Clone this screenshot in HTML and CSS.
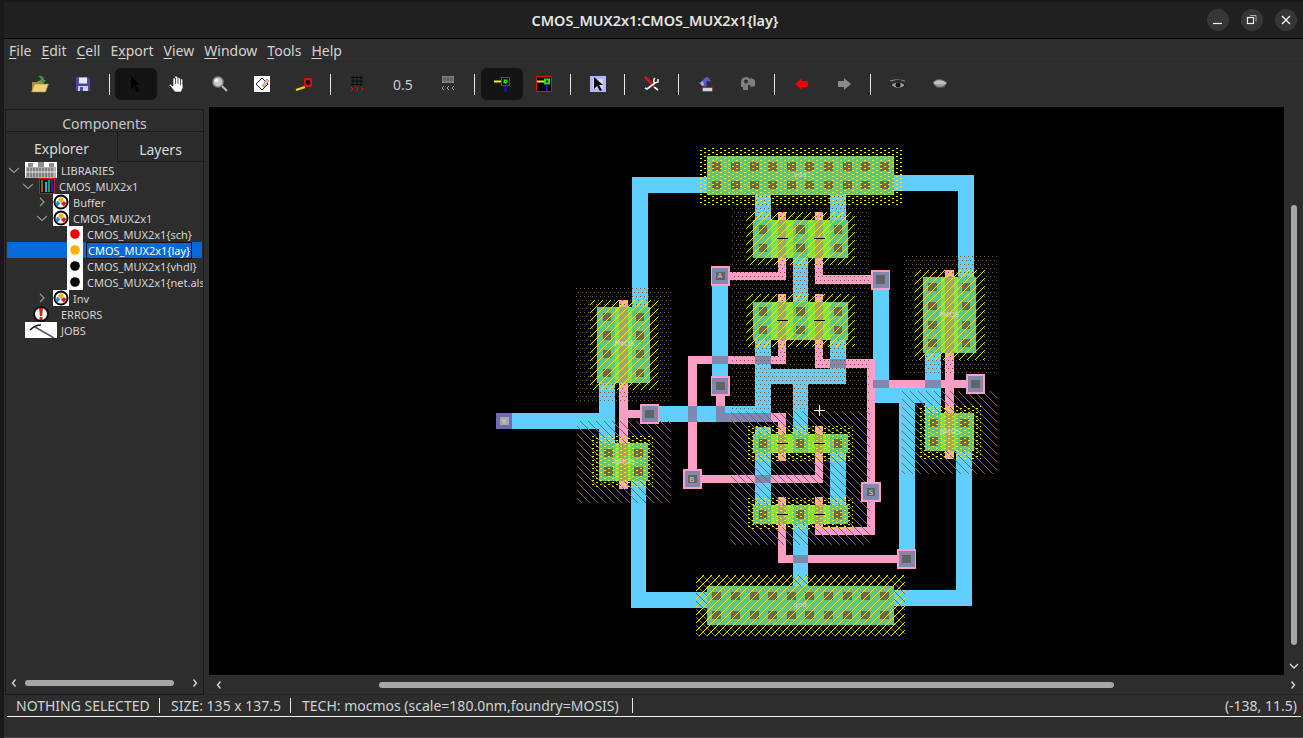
FILE: index.html
```html
<!DOCTYPE html>
<html lang="en">
<head>
    <meta charset="UTF-8">
    <title>CMOS_MUX2x1:CMOS_MUX2x1{lay}</title>
    <link rel="stylesheet" href="styles.css">
</head>
<body>
<svg class="defs" width="0" height="0">
    <symbol id="cell-ico" viewBox="0 0 16 16">
        <rect width="16" height="16" fill="#fff"/>
        <circle cx="8" cy="8" r="6.5" fill="#fff" stroke="#000" stroke-width="2"/>
        <path d="M8 3l3 3-3 3-3-3z" fill="#f5b000"/>
        <path d="M4.500 6.500l3 3-3 3-2-3z" fill="#1e90e0"/>
        <path d="M11 7l2.500 2.500-3 3-2.500-3z" fill="#e81010"/>
    </symbol>
    <symbol id="chev-right" viewBox="0 0 10 10">
        <path d="M3 1l4 4-4 4" fill="none" stroke="#9a9a9a" stroke-width="1.100"/>
    </symbol>
    <symbol id="chev-down" viewBox="0 0 10 10">
        <path d="M0 3l5 4.500 5-4.500" fill="none" stroke="#9a9a9a" stroke-width="1.100"/>
    </symbol>
    <symbol id="sb-left" viewBox="0 0 10 10">
        <path d="M6.500 1.500l-3 3.500 3 3.500" fill="none" stroke="#e0e0e0" stroke-width="1.300"/>
    </symbol>
    <symbol id="sb-right" viewBox="0 0 10 10">
        <path d="M3.500 1.500l3 3.500-3 3.500" fill="none" stroke="#e0e0e0" stroke-width="1.300"/>
    </symbol>
    <symbol id="sb-down" viewBox="0 0 10 10">
        <path d="M1 3l4 4 4-4" fill="none" stroke="#e0e0e0" stroke-width="1.300"/>
    </symbol>
</svg>

<div class="window">
    <header class="titlebar">
        <span></span>
        <div class="title">CMOS_MUX2x1:CMOS_MUX2x1{lay}</div>
        <div class="win-btns">
            <button class="win-btn"><svg width="12" height="12" viewBox="0 0 12 12"><path d="M1 9.500h9" stroke="#eee" stroke-width="1.200"/></svg></button>
            <button class="win-btn"><svg width="12" height="12" viewBox="0 0 12 12"><rect x="1.500" y="3.500" width="6" height="6" fill="none" stroke="#eee" stroke-width="1.200"/><path d="M4 1.500h6v6" fill="none" stroke="#aaa"/></svg></button>
            <button class="win-btn"><svg width="12" height="12" viewBox="0 0 12 12"><path d="M2 2l8 8M10 2l-8 8" stroke="#eee" stroke-width="1.500"/></svg></button>
        </div>
    </header>

    <nav class="menubar">
        <span><u>F</u>ile</span>
        <span><u>E</u>dit</span>
        <span><u>C</u>ell</span>
        <span>E<u>x</u>port</span>
        <span><u>V</u>iew</span>
        <span><u>W</u>indow</span>
        <span><u>T</u>ools</span>
        <span><u>H</u>elp</span>
    </nav>

    <div class="toolbar">
        <div class="tool">
            <svg width="20" height="20" viewBox="0 0 20 20"><path d="M2 8h5l1-1h6v3H6l-3 8H2z" fill="#a88a3a"/><path d="M1.500 18l3-8h14l-3 8z" fill="#ecd27a" stroke="#a08030" stroke-width=".6"/><path d="M8 2c4-1 6 1 6 4h2l-3 4-4-4h2c0-2-1-3-3-4z" fill="#3c9a3c"/></svg>
        </div>
        <div class="tool tool-gap">
            <svg width="18" height="18" viewBox="0 0 18 18"><path d="M2 2h12l2 2v12H2z" fill="#4a4a98"/><rect x="5" y="2.500" width="8" height="6" fill="#e8e8f0"/><rect x="4" y="11" width="10" height="5" fill="#cfcfe4"/><rect x="6" y="12" width="3" height="4" fill="#4a4a98"/></svg>
        </div>
        <i class="sep"></i>
        <div class="tool on">
            <svg width="18" height="18" viewBox="0 0 18 18"><path d="M4 1v13l3-3 3 6 2-1-3-6h4z" fill="#000"/></svg>
        </div>
        <div class="tool">
            <svg width="20" height="20" viewBox="0 0 20 20"><path d="M3 13l-2-2 1-1 3 2V4h2V2h2v1h2v1h2v1h2v9l-2 4H7z" fill="#fff" stroke="#222" stroke-width=".6"/><path d="M7.500 4v6M10 3v7M12.500 4v7M15 5v6" stroke="#222" stroke-width=".8"/></svg>
        </div>
        <div class="tool">
            <svg width="18" height="18" viewBox="0 0 18 18"><circle cx="7" cy="7" r="5" fill="#c8c8c8" stroke="#8a8a8a" stroke-width="1.500"/><circle cx="5.500" cy="5.500" r="2" fill="#f0f0f0"/><path d="M11 11l5 5" stroke="#b8b8b8" stroke-width="2.200"/></svg>
        </div>
        <div class="tool">
            <svg width="16" height="16" viewBox="0 0 16 16"><rect width="16" height="16" fill="#fff"/><path d="M8 2l6 6-6 6-6-6z" fill="#fff" stroke="#102080"/><path d="M8 10l5-7 2 2-5 6z" fill="#e8c890" stroke="#8a6a30" stroke-width=".6"/></svg>
        </div>
        <div class="tool">
            <svg width="18" height="16" viewBox="0 0 18 16"><path d="M1 14l9-3" stroke="#f0e000" stroke-width="2"/><rect x="9" y="2" width="8" height="9" rx="2" fill="#e01010"/><circle cx="13" cy="6.500" r="2.500" fill="#111"/></svg>
        </div>
        <i class="sep"></i>
        <div class="tool">
            <svg width="14" height="16" viewBox="0 0 14 16"><path d="M1 1.500h12M1 5h12M1 8.500h12M3 0v10M7 0v10M11 0v10" stroke="#0c0c0c" stroke-width="1"/><path d="M1 11l2 2-2 2M6 11l2 2-2 2M11 11l2 2-2 2" fill="none" stroke="#e01010"/></svg>
        </div>
        <div class="tool tool-text">0.5</div>
        <div class="tool">
            <svg width="14" height="16" viewBox="0 0 14 16"><rect x="1" y="0" width="12" height="7" fill="#8a8a8a"/><path d="M4 0v7M7 0v7M10 0v7M1 2h12M1 4h12" stroke="#3a3a3a" stroke-width=".6"/><path d="M3 10l-2 2 2 2M8 10l-2 2 2 2M13 10l-2 2 2 2" fill="none" stroke="#999"/></svg>
        </div>
        <i class="sep sep-wide"></i>
        <div class="tool on">
            <svg width="16" height="15" viewBox="0 0 16 15"><path d="M0 4.500h8" stroke="#f0f000" stroke-width="2"/><rect x="7.500" y="0.500" width="8" height="8" fill="#000" stroke="#e01010"/><rect x="9.500" y="2.500" width="4" height="4" fill="#20e020"/><rect x="11" y="4" width="1" height="1" fill="#000"/><path d="M11.500 9v6" stroke="#1010e0" stroke-width="2"/></svg>
        </div>
        <div class="tool">
            <svg width="16" height="16" viewBox="0 0 16 16"><rect x=".5" y=".5" width="15" height="15" fill="#000" stroke="#e01010"/><path d="M1 5.500h8" stroke="#f0f000" stroke-width="2"/><rect x="8" y="2.500" width="6" height="6" fill="#20e020"/><rect x="10" y="4.500" width="2" height="2" fill="#000"/><path d="M11 9v6" stroke="#1010e0" stroke-width="2"/></svg>
        </div>
        <i class="sep sep-wide"></i>
        <div class="tool">
            <svg width="16" height="16" viewBox="0 0 16 16"><rect width="16" height="16" fill="#b4b4ff"/><rect x="3" y="3" width="10" height="10" fill="#d8d8ff"/><path d="M4 1v12l3-3 3 5 2-1-3-5h4z" fill="#000"/></svg>
        </div>
        <i class="sep sep-wide"></i>
        <div class="tool">
            <svg width="18" height="18" viewBox="0 0 18 18"><path d="M2 2l9 9" stroke="#d01818" stroke-width="2.500"/><path d="M12 8l-8 6-2-1M11 12l4 3" fill="none" stroke="#f4f4f4" stroke-width="1.600"/><path d="M12 3a3 3 0 0 0 0 5l3-1 0-3" fill="none" stroke="#f4f4f4" stroke-width="1.500"/></svg>
        </div>
        <i class="sep sep-wide"></i>
        <div class="tool">
            <svg width="16" height="16" viewBox="0 0 16 16"><path d="M1 7l3-2 1-1 3-3 3 1 2 4-3-1-2 1 1 3-2 2-3-1-2-2z" fill="#5858c0"/><path d="M2 7l3-2 1 4-2 1z" fill="#a8a8e8"/><rect x="4.500" y="11.500" width="10" height="4" rx="1" fill="#e0d0d0" stroke="#b83030"/></svg>
        </div>
        <div class="tool">
            <svg width="16" height="16" viewBox="0 0 16 16"><path d="M1 6a5 5 0 0 1 9-3l1-1 4 2v6l-4 1-1-2H8v5H3v-3H1z" fill="#7e7e7e"/><circle cx="6" cy="5.500" r="2" fill="#2d2d2d"/></svg>
        </div>
        <i class="sep sep-wide"></i>
        <div class="tool">
            <svg width="14" height="14" viewBox="0 0 14 14"><path d="M0 7l7-6v3h6v6H7v3z" fill="#f00000"/></svg>
        </div>
        <div class="tool">
            <svg width="14" height="14" viewBox="0 0 14 14"><path d="M14 7L7 1v3H1v6h6v3z" fill="#8a8a8a"/></svg>
        </div>
        <i class="sep sep-wide"></i>
        <div class="tool">
            <svg width="16" height="11" viewBox="0 0 16 11"><path d="M1 6c3-4 10-4 14 0-3 4-10 5-14 0z" fill="#9a9a9a" stroke="#1a1a1a"/><circle cx="8" cy="6" r="2.500" fill="#111"/><path d="M0 2l5-1M4 0h6M11 1l4 1" stroke="#8a8a8a"/></svg>
        </div>
        <div class="tool">
            <svg width="16" height="10" viewBox="0 0 16 10"><path d="M1 4c3-5 10-4 14 0-3 5-10 6-14 0z" fill="#c0c0c0" stroke="#5a5a5a"/><path d="M2 6h12M4 8h9" stroke="#707070" stroke-width=".8"/></svg>
        </div>
    </div>

    <div class="main">
        <aside class="side">
            <div class="tab-top">Components</div>
            <div class="tabs">
                <div class="tab tab-active">Explorer</div>
                <div class="tab">Layers</div>
            </div>
            <div class="tree">
                <div class="row d0">
                    <svg class="chev"><use href="#chev-down"/></svg>
                    <svg class="ico-wide" viewBox="0 0 32 16"><rect width="32" height="16" fill="#fff"/><path d="M1 5h30v11H1z" fill="#b0b0b0"/><path d="M3 1h5v4H3zM13 0h6v5h-6zM24 1h5v4h-5z" fill="#8e8e8e"/><path d="M3 6v9M6 6v9M9 6v9M12 6v9M15 6v9M18 6v9M21 6v9M24 6v9M27 6v9" stroke="#555" stroke-width="1"/><path d="M1 10h30" stroke="#e6e6e6"/></svg>
                    <span>LIBRARIES</span>
                </div>
                <div class="row d1">
                    <svg class="chev"><use href="#chev-down"/></svg>
                    <svg class="ico" viewBox="0 0 16 16"><rect x=".5" y=".5" width="15" height="15" fill="#111" stroke="#e01010"/><rect x="2" y="2" width="2" height="12" fill="#8a5a20"/><rect x="6" y="4" width="2" height="10" fill="#20a8f0"/><rect x="9" y="2" width="2" height="12" fill="#20a040"/><rect x="12" y="2" width="2" height="12" fill="#2020c8"/></svg>
                    <span>CMOS_MUX2x1</span>
                </div>
                <div class="row d2">
                    <svg class="chev"><use href="#chev-right"/></svg>
                    <svg class="ico"><use href="#cell-ico"/></svg>
                    <span>Buffer</span>
                </div>
                <div class="row d2">
                    <svg class="chev"><use href="#chev-down"/></svg>
                    <svg class="ico"><use href="#cell-ico"/></svg>
                    <span>CMOS_MUX2x1</span>
                </div>
                <div class="row d3">
                    <span class="chev"></span>
                    <svg class="ico" viewBox="0 0 16 16"><rect width="16" height="16" fill="#fff"/><circle cx="8" cy="8" r="4.800" fill="#f00000"/></svg>
                    <span>CMOS_MUX2x1{sch}</span>
                </div>
                <div class="row d3 selected">
                    <span class="chev"></span>
                    <svg class="ico" viewBox="0 0 16 16"><rect width="16" height="16" fill="#fff"/><circle cx="8" cy="8" r="4.800" fill="#ffb000"/></svg>
                    <span class="sel-label">CMOS_MUX2x1{lay}</span>
                </div>
                <div class="row d3">
                    <span class="chev"></span>
                    <svg class="ico" viewBox="0 0 16 16"><rect width="16" height="16" fill="#fff"/><circle cx="8" cy="8" r="4.800" fill="#000"/></svg>
                    <span>CMOS_MUX2x1{vhdl}</span>
                </div>
                <div class="row d3">
                    <span class="chev"></span>
                    <svg class="ico" viewBox="0 0 16 16"><rect width="16" height="16" fill="#fff"/><circle cx="8" cy="8" r="4.800" fill="#000"/></svg>
                    <span>CMOS_MUX2x1{net.als}</span>
                </div>
                <div class="row d2">
                    <svg class="chev"><use href="#chev-right"/></svg>
                    <svg class="ico"><use href="#cell-ico"/></svg>
                    <span>Inv</span>
                </div>
                <div class="row d0">
                    <span class="chev"></span>
                    <svg class="ico ico-err" viewBox="0 0 16 16"><circle cx="8" cy="8" r="7" fill="#fff" stroke="#111" stroke-width="2"/><path d="M6 2h4l-1 8H7z" fill="#e01818"/><rect x="6.500" y="11" width="3" height="3" fill="#e01818"/></svg>
                    <span>ERRORS</span>
                </div>
                <div class="row d0">
                    <span class="chev"></span>
                    <svg class="ico-wide" viewBox="0 0 32 16"><rect width="32" height="16" fill="#fff"/><path d="M5 8c3-3 7-5 11-5" fill="none" stroke="#111" stroke-width="1.500"/><path d="M10 5l19 11" stroke="#555" stroke-width="1.500"/></svg>
                    <span>JOBS</span>
                </div>
            </div>
            <div class="side-scroll">
                <svg class="arrow"><use href="#sb-left"/></svg>
                <div class="side-track"><div class="side-thumb"></div></div>
                <svg class="arrow"><use href="#sb-right"/></svg>
            </div>
        </aside>

        <section class="workspace">
            <svg class="canvas" width="1075" height="568" viewBox="209 107 1075 568" shape-rendering="crispEdges">
                <rect x="209" y="107" width="1075" height="568" fill="#000"/>

                <g fill="#60cfff">
                    <rect x="632" y="177" width="76" height="16"/>
                    <rect x="632" y="177" width="16" height="130"/>
                    <rect x="631" y="480" width="15" height="127"/>
                    <rect x="631" y="592" width="77" height="16"/>
                    <rect x="893" y="175" width="81" height="16"/>
                    <rect x="958" y="175" width="16" height="103"/>
                    <rect x="956" y="450" width="16" height="156"/>
                    <rect x="893" y="590" width="79" height="16"/>
                    <rect x="755" y="195" width="16" height="26"/>
                    <rect x="830" y="195" width="16" height="26"/>
                    <rect x="793" y="257" width="15" height="46"/>
                    <rect x="755" y="339" width="16" height="45"/>
                    <rect x="830" y="339" width="16" height="45"/>
                    <rect x="755" y="369" width="91" height="15"/>
                    <rect x="755" y="369" width="16" height="53"/>
                    <rect x="793" y="384" width="15" height="51"/>
                    <rect x="755" y="427" width="16" height="8"/>
                    <rect x="755" y="452" width="16" height="54"/>
                    <rect x="830" y="452" width="16" height="54"/>
                    <rect x="793" y="523" width="15" height="64"/>
                    <rect x="712" y="284" width="16" height="94"/>
                    <rect x="873" y="288" width="16" height="115"/>
                    <rect x="875" y="388" width="66" height="15"/>
                    <rect x="925" y="352" width="16" height="62"/>
                    <rect x="899" y="403" width="16" height="148"/>
                    <rect x="496" y="413" width="119" height="16"/>
                    <rect x="599" y="382" width="16" height="62"/>
                    <rect x="657" y="406" width="114" height="16"/>
                </g>

                <g fill="#ff9ec4">
                    <rect x="778" y="212" width="8" height="68"/>
                    <rect x="728" y="272" width="58" height="8"/>
                    <rect x="815" y="212" width="8" height="72"/>
                    <rect x="815" y="275" width="58" height="9"/>
                    <rect x="778" y="294" width="8" height="70"/>
                    <rect x="688" y="356" width="98" height="8"/>
                    <rect x="688" y="356" width="9" height="115"/>
                    <rect x="700" y="475" width="123" height="8"/>
                    <rect x="815" y="426" width="8" height="57"/>
                    <rect x="815" y="294" width="8" height="74"/>
                    <rect x="815" y="359" width="60" height="9"/>
                    <rect x="867" y="359" width="8" height="176"/>
                    <rect x="815" y="527" width="60" height="8"/>
                    <rect x="815" y="497" width="8" height="38"/>
                    <rect x="778" y="497" width="8" height="66"/>
                    <rect x="778" y="555" width="120" height="8"/>
                    <rect x="771" y="413" width="15" height="9"/>
                    <rect x="778" y="413" width="8" height="48"/>
                    <rect x="716" y="394" width="9" height="14"/>
                    <rect x="619" y="300" width="9" height="189"/>
                    <rect x="628" y="410" width="14" height="8"/>
                    <rect x="945" y="270" width="9" height="189"/>
                    <rect x="887" y="380" width="80" height="8"/>
                </g>

                <g fill="#8088ae">
                    <rect x="755" y="356" width="16" height="8"/>
                    <rect x="712" y="356" width="16" height="8"/>
                    <rect x="830" y="359" width="16" height="9"/>
                    <rect x="688" y="406" width="9" height="16"/>
                    <rect x="716" y="406" width="9" height="16"/>
                    <rect x="716" y="413" width="55" height="9"/>
                    <rect x="755" y="475" width="16" height="8"/>
                    <rect x="793" y="555" width="15" height="8"/>
                    <rect x="873" y="380" width="16" height="8"/>
                    <rect x="925" y="380" width="16" height="8"/>
                </g>

                <!-- the data-px groups get filled with pixel patterns by script.js -->
                <g data-px="brownDots" fill="#7a5a30">
                    <rect x="731" y="196" width="138" height="214"/>
                    <rect x="575" y="286" width="97" height="118"/>
                    <rect x="903" y="256" width="94" height="118"/>
                </g>
                <g data-px="hatch" fill="#8c6434">
                    <rect x="731" y="411" width="139" height="134"/>
                    <rect x="577" y="421" width="94" height="82"/>
                    <rect x="902" y="391" width="95" height="83"/>
                    <rect x="696" y="575" width="209" height="61"/>
                </g>

                <g fill="#74e84a">
                    <rect x="707" y="156" width="187" height="39"/>
                    <rect x="753" y="220" width="95" height="38"/>
                    <rect x="753" y="302" width="95" height="38"/>
                    <rect x="753" y="434" width="95" height="19"/>
                    <rect x="753" y="505" width="95" height="19"/>
                    <rect x="597" y="307" width="53" height="76"/>
                    <rect x="599" y="443" width="49" height="38"/>
                    <rect x="923" y="277" width="53" height="76"/>
                    <rect x="925" y="413" width="49" height="38"/>
                    <rect x="707" y="586" width="187" height="39"/>
                </g>
                <g fill="#5cc492">
                    <rect x="707" y="156" width="187" height="39"/>
                    <rect x="707" y="586" width="187" height="39"/>
                    <rect x="753" y="220" width="18" height="38"/>
                    <rect x="793" y="220" width="15" height="38"/>
                    <rect x="830" y="220" width="18" height="38"/>
                    <rect x="753" y="302" width="18" height="38"/>
                    <rect x="793" y="302" width="15" height="38"/>
                    <rect x="830" y="302" width="18" height="38"/>
                    <rect x="753" y="434" width="18" height="19"/>
                    <rect x="793" y="434" width="15" height="19"/>
                    <rect x="830" y="434" width="18" height="19"/>
                    <rect x="753" y="505" width="18" height="19"/>
                    <rect x="793" y="505" width="15" height="19"/>
                    <rect x="830" y="505" width="18" height="19"/>
                    <rect x="597" y="307" width="18" height="76"/>
                    <rect x="632" y="307" width="18" height="76"/>
                    <rect x="599" y="443" width="16" height="38"/>
                    <rect x="631" y="443" width="17" height="38"/>
                    <rect x="923" y="277" width="18" height="76"/>
                    <rect x="958" y="277" width="18" height="76"/>
                    <rect x="925" y="413" width="16" height="38"/>
                    <rect x="956" y="413" width="18" height="38"/>
                </g>
                <g fill="#a4a470">
                    <rect x="778" y="220" width="8" height="38"/>
                    <rect x="815" y="220" width="8" height="38"/>
                    <rect x="778" y="302" width="8" height="38"/>
                    <rect x="815" y="302" width="8" height="38"/>
                    <rect x="778" y="434" width="8" height="19"/>
                    <rect x="815" y="434" width="8" height="19"/>
                    <rect x="778" y="505" width="8" height="19"/>
                    <rect x="815" y="505" width="8" height="19"/>
                    <rect x="619" y="307" width="9" height="76"/>
                    <rect x="619" y="443" width="9" height="38"/>
                    <rect x="945" y="277" width="9" height="76"/>
                    <rect x="945" y="413" width="9" height="38"/>
                </g>

                <g fill="#6e6458">
                    <rect x="712" y="162" width="9" height="9"/><rect x="731" y="162" width="9" height="9"/><rect x="750" y="162" width="9" height="9"/><rect x="768" y="162" width="9" height="9"/><rect x="787" y="162" width="9" height="9"/><rect x="805" y="162" width="9" height="9"/><rect x="824" y="162" width="9" height="9"/><rect x="843" y="162" width="9" height="9"/><rect x="861" y="162" width="9" height="9"/><rect x="880" y="162" width="9" height="9"/>
                    <rect x="712" y="181" width="9" height="8"/><rect x="731" y="181" width="9" height="8"/><rect x="750" y="181" width="9" height="8"/><rect x="768" y="181" width="9" height="8"/><rect x="787" y="181" width="9" height="8"/><rect x="805" y="181" width="9" height="8"/><rect x="824" y="181" width="9" height="8"/><rect x="843" y="181" width="9" height="8"/><rect x="861" y="181" width="9" height="8"/><rect x="880" y="181" width="9" height="8"/>
                    <rect x="712" y="592" width="9" height="8"/><rect x="731" y="592" width="9" height="8"/><rect x="750" y="592" width="9" height="8"/><rect x="768" y="592" width="9" height="8"/><rect x="787" y="592" width="9" height="8"/><rect x="805" y="592" width="9" height="8"/><rect x="824" y="592" width="9" height="8"/><rect x="843" y="592" width="9" height="8"/><rect x="861" y="592" width="9" height="8"/><rect x="880" y="592" width="9" height="8"/>
                    <rect x="712" y="611" width="9" height="8"/><rect x="731" y="611" width="9" height="8"/><rect x="750" y="611" width="9" height="8"/><rect x="768" y="611" width="9" height="8"/><rect x="787" y="611" width="9" height="8"/><rect x="805" y="611" width="9" height="8"/><rect x="824" y="611" width="9" height="8"/><rect x="843" y="611" width="9" height="8"/><rect x="861" y="611" width="9" height="8"/><rect x="880" y="611" width="9" height="8"/>
                    <rect x="759" y="225" width="8" height="9"/><rect x="796" y="225" width="9" height="9"/><rect x="834" y="225" width="8" height="9"/>
                    <rect x="759" y="244" width="8" height="8"/><rect x="796" y="244" width="9" height="8"/><rect x="834" y="244" width="8" height="8"/>
                    <rect x="759" y="307" width="8" height="9"/><rect x="796" y="307" width="9" height="9"/><rect x="834" y="307" width="8" height="9"/>
                    <rect x="759" y="326" width="8" height="8"/><rect x="796" y="326" width="9" height="8"/><rect x="834" y="326" width="8" height="8"/>
                    <rect x="603" y="313" width="8" height="8"/><rect x="636" y="313" width="8" height="8"/>
                    <rect x="603" y="331" width="8" height="9"/><rect x="636" y="331" width="8" height="9"/>
                    <rect x="603" y="350" width="8" height="8"/><rect x="636" y="350" width="8" height="8"/>
                    <rect x="603" y="369" width="8" height="8"/><rect x="636" y="369" width="8" height="8"/>
                    <rect x="928" y="283" width="9" height="8"/><rect x="962" y="283" width="8" height="8"/>
                    <rect x="928" y="302" width="9" height="8"/><rect x="962" y="302" width="8" height="8"/>
                    <rect x="928" y="321" width="9" height="8"/><rect x="962" y="321" width="8" height="8"/>
                    <rect x="928" y="339" width="9" height="8"/><rect x="962" y="339" width="8" height="8"/>
                    <rect x="604" y="449" width="9" height="8"/><rect x="634" y="449" width="9" height="8"/>
                    <rect x="604" y="467" width="9" height="9"/><rect x="634" y="467" width="9" height="9"/>
                    <rect x="930" y="419" width="8" height="8"/><rect x="960" y="419" width="9" height="8"/>
                    <rect x="930" y="437" width="8" height="9"/><rect x="960" y="437" width="9" height="9"/>
                    <rect x="759" y="439" width="8" height="9"/><rect x="796" y="439" width="8" height="9"/><rect x="834" y="439" width="8" height="9"/>
                    <rect x="759" y="510" width="8" height="9"/><rect x="796" y="510" width="8" height="9"/><rect x="834" y="510" width="8" height="9"/>
                </g>

                <g data-px="yellowLines" fill="#f4f400">
                    <rect x="746" y="212" width="109" height="53"/>
                    <rect x="746" y="294" width="109" height="53"/>
                    <rect x="590" y="300" width="68" height="90"/>
                    <rect x="915" y="270" width="70" height="90"/>
                    <rect x="696" y="575" width="209" height="61"/>
                </g>
                <g data-px="yellowDots" fill="#f4f400">
                    <rect x="699" y="147" width="205" height="58"/>
                    <rect x="748" y="426" width="105" height="35"/>
                    <rect x="748" y="498" width="105" height="32"/>
                    <rect x="592" y="436" width="61" height="52"/>
                    <rect x="920" y="406" width="61" height="53"/>
                </g>

                <g fill="#000">
                    <rect x="777" y="238" width="11" height="1"/><rect x="814" y="238" width="11" height="1"/>
                    <rect x="777" y="320" width="11" height="1"/><rect x="814" y="320" width="11" height="1"/>
                    <rect x="777" y="443" width="11" height="1"/><rect x="814" y="443" width="11" height="1"/>
                    <rect x="777" y="514" width="11" height="1"/><rect x="814" y="514" width="11" height="1"/>
                </g>

                <g fill="#ff9ec4">
                    <rect x="711" y="266" width="19" height="20"/>
                    <rect x="871" y="270" width="19" height="20"/>
                    <rect x="711" y="376" width="19" height="20"/>
                    <rect x="640" y="404" width="19" height="20"/>
                    <rect x="683" y="469" width="19" height="20"/>
                    <rect x="861" y="482" width="20" height="20"/>
                    <rect x="897" y="549" width="19" height="20"/>
                    <rect x="966" y="374" width="19" height="20"/>
                </g>
                <g fill="#8088ae">
                    <rect x="712" y="268" width="16" height="16"/>
                    <rect x="873" y="272" width="16" height="16"/>
                    <rect x="712" y="378" width="16" height="16"/>
                    <rect x="642" y="406" width="16" height="16"/>
                    <rect x="685" y="471" width="15" height="16"/>
                    <rect x="863" y="484" width="16" height="16"/>
                    <rect x="899" y="551" width="16" height="16"/>
                    <rect x="968" y="376" width="15" height="16"/>
                </g>
                <rect x="496" y="413" width="16" height="16" fill="#7268b8"/>
                <g fill="#636363">
                    <rect x="716" y="272" width="9" height="8"/>
                    <rect x="876" y="275" width="9" height="9"/>
                    <rect x="716" y="382" width="9" height="8"/>
                    <rect x="645" y="410" width="9" height="8"/>
                    <rect x="688" y="475" width="9" height="8"/>
                    <rect x="867" y="488" width="8" height="8"/>
                    <rect x="902" y="555" width="9" height="8"/>
                    <rect x="971" y="380" width="9" height="8"/>
                </g>
                <rect x="500" y="417" width="9" height="8" fill="#a8a8a8"/>

                <g class="labels" text-anchor="middle">
                    <text x="800" y="177">vdd</text>
                    <text x="624" y="346">PMOS</text>
                    <text x="624" y="464">NMOS</text>
                    <text x="949" y="317">PMOS</text>
                    <text x="950" y="434">NMOS</text>
                    <text x="800" y="607">gnd</text>
                    <text x="720" y="278">A</text>
                    <text x="692" y="482">B</text>
                    <text x="871" y="495">S</text>
                    <text x="504" y="424">Y</text>
                </g>
                <path d="M814 410.500h11M819.500 405v11" stroke="#fff" fill="none"/>
            </svg>
            <div class="vscroll">
                <svg class="arrow"></svg>
                <div class="v-track"><div class="v-thumb"></div></div>
                <svg class="arrow"><use href="#sb-down"/></svg>
            </div>
            <div class="hscroll">
                <svg class="arrow"><use href="#sb-left"/></svg>
                <div class="h-track"><div class="h-thumb"></div></div>
                <svg class="arrow"><use href="#sb-right"/></svg>
            </div>
        </section>
    </div>

    <footer class="status">
        <span class="st st-sel">NOTHING SELECTED</span>
        <span class="st st-size">SIZE: 135 x 137.5</span>
        <span class="st st-tech">TECH: mocmos (scale=180.0nm,foundry=MOSIS)</span>
        <span class="coords">(-138, 11.5)</span>
    </footer>
    <div class="bottom-strip"></div>
</div>
<script src="script.js"></script>
</body>
</html>
```

FILE: styles.css
```css
* {
    box-sizing: border-box;
}
html, body {
    margin: 0;
    height: 100%;
}
body {
    background-color: #1e161e;
    overflow: hidden;
    font-family: "Noto Sans", "Open Sans", sans-serif;
    color: #d8d8d8;
}
.defs {
    display: block;
    height: 0;
}
.window {
    width: 1299px;
    height: 738px;
    margin-left: 4px;
    background-color: #2d2d2d;
    display: flex;
    flex-direction: column;
}

/* title bar */
.titlebar {
    height: 39px;
    border-top: 2px solid #181818;
    border-bottom: 1px solid #000;
    background-color: #202020;
    display: grid;
    grid-template-columns: 1fr auto 1fr;
    align-items: center;
}
.title {
    font-size: 14.4px;
    font-weight: 600;
    color: #e4e4e4;
    padding-left: 3px;
}
.win-btns {
    display: flex;
    justify-content: flex-end;
    gap: 12px;
    padding-right: 6px;
}
.win-btn {
    width: 22px;
    height: 22px;
    border: none;
    border-radius: 50%;
    padding: 0;
    background-color: #363636;
    display: flex;
    align-items: center;
    justify-content: center;
}

/* menu */
.menubar {
    height: 22px;
    display: flex;
    align-items: center;
    font-size: 14px;
    color: #d2d2d2;
    padding-left: 5px;
    gap: 10px;
}
.menubar u {
    text-underline-offset: 2px;
}

/* toolbar */
.toolbar {
    height: 45px;
    border-top: 1px solid #292929;
    display: flex;
    align-items: center;
    padding-left: 15px;
}
.tool {
    width: 42px;
    height: 32px;
    flex: none;
    display: flex;
    align-items: center;
    justify-content: center;
    border-radius: 6px;
}
.tool.on {
    background-color: #141414;
}
.tool-gap {
    margin-left: 1px;
}
.tool-text {
    font-size: 14px;
    color: #c8ccd0;
    margin: 0 3px 0 4px;
}
.sep {
    width: 1px;
    height: 21px;
    margin: 0 5px;
    background-color: #e8e8e8;
    flex: none;
}
.sep-wide {
    margin-right: 6px;
}

/* main area */
.main {
    height: 590px;
    display: flex;
}
.side {
    width: 199px;
    height: 586px;
    margin-left: 1px;
    margin-top: 3px;
    border: 1px solid #1c1c1c;
    display: flex;
    flex-direction: column;
}
.tab-top {
    height: 22px;
    font-size: 14px;
    text-align: center;
    color: #c8c8c8;
    line-height: 28px;
    border-bottom: 1px solid #1c1c1c;
}
.tabs {
    height: 30px;
    display: flex;
}
.tab {
    flex: 1;
    font-size: 14px;
    text-align: center;
    line-height: 31px;
    margin-top: 2px;
    border-bottom: 1px solid #1c1c1c;
    background-color: #2b2b2b;
}
.tab-active {
    flex: none;
    width: 112px;
    margin-top: 0;
    border-bottom: none;
    border-right: 1px solid #1c1c1c;
    line-height: 33px;
}
.tree {
    flex: 1;
    overflow: hidden;
    font-size: 11px;
    color: #d4d4d4;
}
.row {
    height: 16px;
    display: flex;
    align-items: center;
    white-space: nowrap;
}
.d0 { padding-left: 3px; }
.d1 { padding-left: 17px; }
.d2 { padding-left: 31px; }
.d3 { padding-left: 45px; }
.chev {
    width: 10px;
    height: 10px;
    margin-right: 6px;
    flex: none;
}
.ico {
    width: 16px;
    height: 16px;
    flex: none;
    margin-right: 4px;
}
.ico-wide {
    width: 32px;
    height: 16px;
    flex: none;
    margin-right: 4px;
}
.ico-err {
    margin: 0 12px 0 8px;
}
.selected {
    background-color: #0669d8;
    color: #fff;
    margin: 0 1px;
    padding-left: 44px;
}
.sel-label {
    border: 1px solid #111;
    padding: 1px 1px 0;
    margin-left: -1px;
    line-height: 14px;
}
.side-scroll {
    height: 22px;
    display: flex;
    align-items: center;
    padding: 0 3px;
}
.arrow {
    width: 10px;
    height: 10px;
    flex: none;
}
.side-track {
    flex: 1;
    padding: 0 5px 0 6px;
}
.side-thumb {
    width: 149px;
    height: 6px;
    border-radius: 3px;
    background-color: #a6a6a6;
}

/* canvas */
.workspace {
    width: 1094px;
    margin-left: 5px;
    margin-top: 1px;
    display: grid;
    grid-template-columns: 1075px 19px;
    grid-template-rows: 568px 21px;
}
.canvas {
    display: block;
}
.labels {
    font-family: "DejaVu Sans", sans-serif;
    font-size: 7px;
    fill: #d8d8d8;
    shape-rendering: auto;
}
.vscroll {
    display: flex;
    flex-direction: column;
    align-items: center;
    padding: 3px 0 4px;
    grid-row: 1;
    grid-column: 2;
}
.v-track {
    flex: 1;
    padding-top: 85px;
}
.v-thumb {
    width: 6px;
    height: 440px;
    border-radius: 3px;
    background-color: #a6a6a6;
}
.hscroll {
    display: flex;
    align-items: center;
    height: 20px;
    padding: 0 5px;
    border-bottom: 1px solid #232323;
    grid-row: 2;
    grid-column: 1 / 3;
}
.h-track {
    flex: 1;
    position: relative;
    height: 6px;
}
.h-thumb {
    position: absolute;
    left: 155px;
    width: 735px;
    height: 6px;
    border-radius: 3px;
    background-color: #a6a6a6;
}

/* status bar */
.status {
    height: 21px;
    margin-left: 3px;
    margin-right: 2px;
    padding-bottom: 2px;
    border-bottom: 1px solid #f0f0f0;
    display: flex;
    align-items: center;
    font-size: 14px;
    color: #cdd3d8;
}
.st {
    height: 15px;
    line-height: 15px;
    border-right: 1px solid #e8e8e8;
    white-space: nowrap;
    flex: none;
}
.st-sel { width: 153px; padding-left: 9px; }
.st-size { width: 131px; padding-left: 11px; }
.st-tech { width: 342px; padding-left: 11px; }
.coords {
    margin-left: auto;
    padding-right: 4px;
}
.bottom-strip {
    flex: 1;
    border-bottom: 1px solid #4a4a4a;
}
```

FILE: script.js
```js
// select/well layers are stipple patterns, plotted pixel by pixel to stay sharp
const stipple = {
    hatch: (x, y) => (x - y) % 8 === 7,
    yellowLines: (x, y) => (x + y) % 8 === 6,
    brownDots: (x, y) => y % 4 === 0 && x % 4 === (y % 8 === 0 ? 0 : 2),
    yellowDots: (x, y) => (y % 4 === 0 && x % 8 < 2) || (y % 4 === 2 && x % 8 >= 4 && x % 8 < 6)
};

document.querySelectorAll('[data-px]').forEach(group => {
    const test = stipple[group.dataset.px];
    let d = '';
    group.querySelectorAll('rect').forEach(rect => {
        const x0 = +rect.getAttribute('x');
        const y0 = +rect.getAttribute('y');
        const w = +rect.getAttribute('width');
        const h = +rect.getAttribute('height');
        for (let y = y0; y < y0 + h; y++) {
            for (let x = x0; x < x0 + w; x++) {
                if (test(x, y)) d += `M${x} ${y}h1v1h-1z`;
            }
        }
    });
    const path = document.createElementNS('http://www.w3.org/2000/svg', 'path');
    path.setAttribute('d', d);
    group.replaceChildren(path);
});
```
